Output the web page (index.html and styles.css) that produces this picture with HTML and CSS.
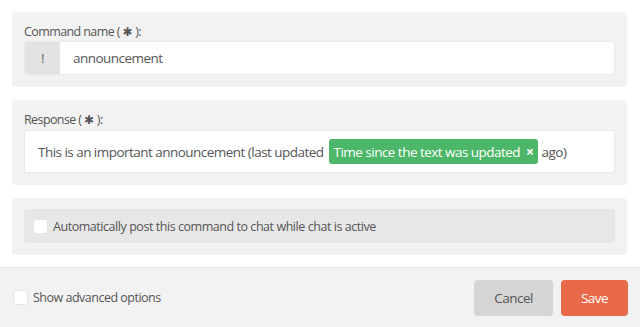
FILE: index.html
```html
<!DOCTYPE html>
<html>

<head>
  <meta charset="UTF-8">
  <title>Edit command</title>
  <link rel="stylesheet" href="styles.css">
</head>

<body>
  <div id="dialog">

    <div class="content">
      <div class="panel">
        <label class="title">Command name ( <span class="req">✱</span> ):</label>
        <div class="field">
          <span class="prefix">!</span>
          <span class="value">announcement</span>
        </div>
      </div>

      <div class="panel">
        <label class="title">Response ( <span class="req">✱</span> ):</label>
        <div class="field response">
          <span class="value">This is an important announcement (last updated</span>
          <span class="tag">Time since the text was updated <b class="close">×</b></span>
          <span class="value">ago)</span>
        </div>
      </div>

      <div class="panel single">
        <div class="option">
          <span class="check"></span>
          <span>Automatically post this command to chat while chat is active</span>
        </div>
      </div>
    </div>

    <div class="footer">
      <div class="advanced">
        <span class="check"></span>
        <span>Show advanced options</span>
      </div>
      <div class="buttons">
        <button class="btn cancel">Cancel</button>
        <button class="btn save">Save</button>
      </div>
    </div>

  </div>
</body>

</html>
```

FILE: styles.css
```css
body,
html {
  padding: 0;
  margin: 0;
}

body {
  font-family: "Open Sans", "DejaVu Sans", sans-serif;
  color: #555;
  background: #FFF;
}

#dialog {
  width: 640px;
  height: 327px;
  display: flex;
  flex-direction: column;
}

.content {
  padding: 12px 13px 12px 12px;
  display: flex;
  flex-direction: column;
  gap: 13px;
}

.panel {
  background: #f2f2f2;
  border-radius: 4px;
  padding: 10px 12px 12px;
  display: flex;
  flex-direction: column;
}

.panel.single {
  padding: 11px 12px 12px;
}

.title {
  font-size: 12.5px;
  letter-spacing: -0.6px;
  line-height: 19px;
  height: 19px;
}

.req {
  font-family: "DejaVu Sans", sans-serif;
  font-size: 12px;
  letter-spacing: 0;
}

.field {
  display: flex;
  align-items: center;
  height: 34px;
  background: #FFF;
  border: 1px solid #e8e8e8;
  border-radius: 3px;
  box-sizing: border-box;
  font-size: 13.5px;
  letter-spacing: -0.53px;
  white-space: nowrap;
}

.prefix {
  width: 35px;
  align-self: stretch;
  background: #e3e3e3;
  color: #666;
  display: flex;
  justify-content: center;
  align-items: center;
  border-radius: 3px 0 0 3px;
}

.field .value {
  padding-left: 13px;
}

.response {
  height: 43px;
  margin-top: 1px;
}

.response .value + .tag {
  margin-left: 5px;
}

.tag {
  background: #4cb669;
  color: #FFF;
  border-radius: 3px;
  height: 25px;
  line-height: 25px;
  padding: 0 4px 0 5px;
}

.tag + .value {
  padding-left: 4px;
}

.close {
  font-size: 14px;
  margin-left: 3px;
}

.option {
  background: #e7e7e7;
  border-radius: 4px;
  height: 34px;
  display: flex;
  align-items: center;
  padding-left: 9px;
  font-size: 12.5px;
  letter-spacing: -0.45px;
  gap: 5px;
}

.check {
  width: 15px;
  height: 15px;
  background: #FFF;
  border: 1px solid #e4e4e4;
  border-radius: 3px;
  box-sizing: border-box;
}

.footer {
  flex: 1;
  background: #f2f2f2;
  border-top: 1px solid #e6e6e6;
  display: flex;
  justify-content: space-between;
  align-items: center;
  padding: 0 12px 0 13px;
}

.advanced {
  display: flex;
  align-items: center;
  gap: 5px;
  font-size: 12.5px;
  letter-spacing: -0.5px;
}

.buttons {
  display: flex;
  gap: 8px;
}

.btn {
  font-family: "Open Sans", sans-serif;
  font-size: 13.5px;
  letter-spacing: -0.5px;
  height: 36px;
  border: none;
  border-radius: 4px;
}

.cancel {
  width: 79px;
  background: #d5d5d5;
  color: #555;
}

.save {
  width: 67px;
  background: #e96a48;
  color: #FFF;
}
```
